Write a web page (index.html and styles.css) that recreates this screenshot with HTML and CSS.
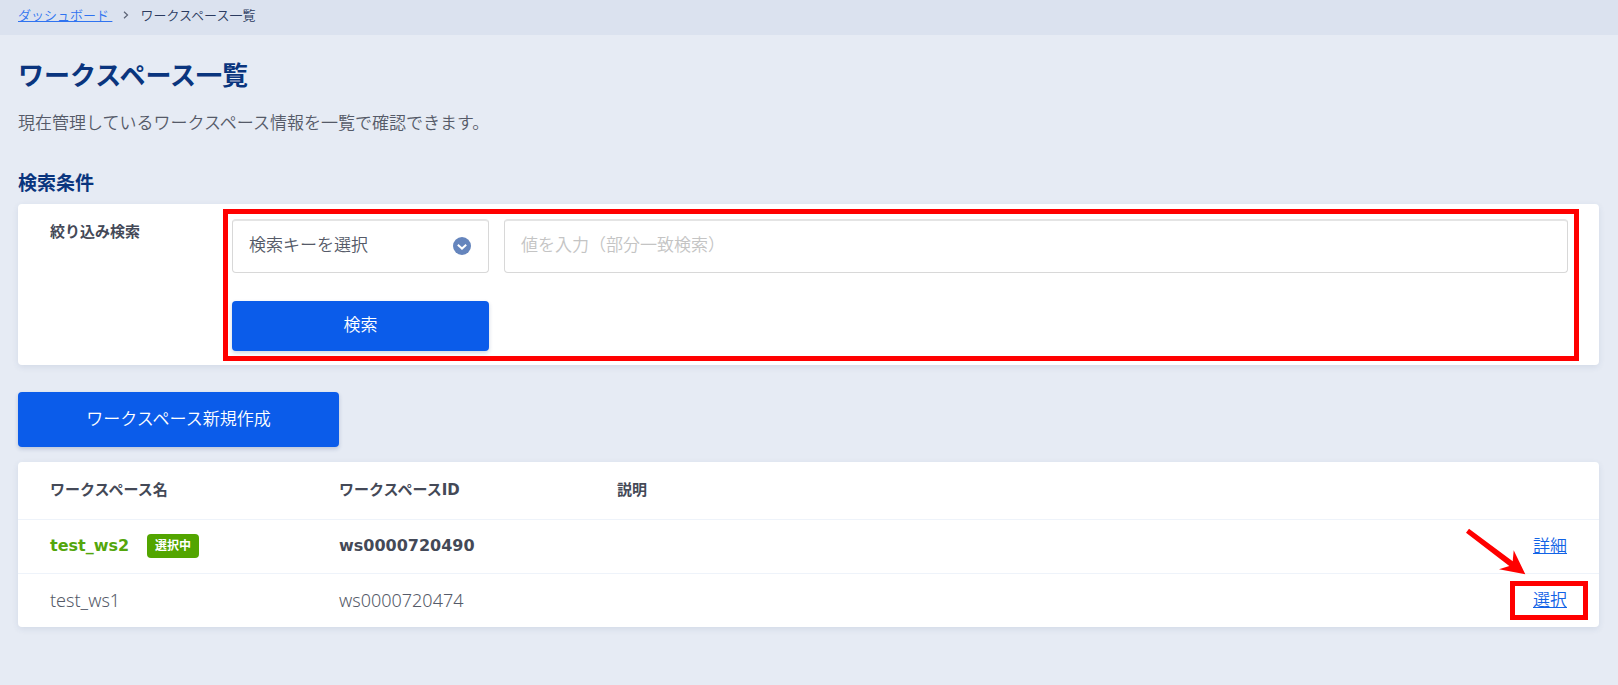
FILE: index.html
```html
<!DOCTYPE html>
<html lang="ja">

<head>
    <meta charset="UTF-8">
    <meta name="viewport" content="width=device-width, initial-scale=1.0">
    <title>ワークスペース一覧</title>
    <link rel="stylesheet" href="styles.css">
</head>

<body>
    <nav class="breadcrumb">
        <a href="#" class="link">ダッシュボード&nbsp;</a>
        <svg class="sep" width="6" height="8" viewBox="0 0 6 8">
            <path d="M1 0.8 L4.5 4 L1 7.2" fill="none" stroke="#5b6375" stroke-width="1.2" />
        </svg>
        <span>ワークスペース一覧</span>
    </nav>

    <main class="content">
        <h1>ワークスペース一覧</h1>
        <p class="lead">現在管理しているワークスペース情報を一覧で確認できます。</p>

        <h2>検索条件</h2>
        <form class="card search">
            <label class="searchLabel" for="keyword">絞り込み検索</label>
            <div class="fields">
                <div class="selectWrap">
                    <select id="searchKey" aria-label="検索キー">
                        <option>検索キーを選択</option>
                    </select>
                    <svg class="selectIcon" width="18" height="18" viewBox="0 0 18 18">
                        <circle cx="9" cy="9" r="9" fill="#6585bd" />
                        <path d="M4.8 7.8 L9 11.6 L13.2 7.8" fill="none" stroke="#fff" stroke-width="2" />
                    </svg>
                </div>
                <input type="text" id="keyword" placeholder="値を入力（部分一致検索）">
                <button type="button" class="btn">検索</button>
            </div>
        </form>

        <button type="button" class="btn btnNew">ワークスペース新規作成</button>

        <div class="card">
            <table>
                <thead>
                    <tr>
                        <th class="colName">ワークスペース名</th>
                        <th class="colId">ワークスペースID</th>
                        <th>説明</th>
                        <th class="colAction"></th>
                    </tr>
                </thead>
                <tbody>
                    <tr class="current">
                        <td><span class="name">test_ws2</span><span class="badge">選択中</span></td>
                        <td>ws0000720490</td>
                        <td></td>
                        <td class="action"><a href="#" class="link">詳細</a></td>
                    </tr>
                    <tr>
                        <td>test_ws1</td>
                        <td>ws0000720474</td>
                        <td></td>
                        <td class="action">
                            <span class="marked">
                                <a href="#" class="link">選択</a>
                                <svg class="arrow" width="60" height="47" viewBox="0 0 60 47">
                                    <path d="M3 0.7 L46.7 33.3 L47.7 22.3 L59.3 46.3 L33 41.3 L43.3 38 L0 4.7 Z" fill="#f00" />
                                </svg>
                            </span>
                        </td>
                    </tr>
                </tbody>
            </table>
        </div>
    </main>
</body>

</html>
```

FILE: styles.css
```css
* {
    box-sizing: border-box;
}

body {
    margin: 0;
    background-color: #e6ebf4;
    color: #555a68;
    font-family: "Noto Sans", "Noto Sans CJK JP", sans-serif;
    font-size: 17px;
    font-weight: 350;
    line-height: 24px;
}

.link {
    color: #1263e6;
}

.breadcrumb {
    display: flex;
    align-items: center;
    gap: 11px;
    height: 35px;
    padding: 0 18px 5px;
    background-color: #dbe2ef;
    color: #2b3b60;
    font-size: 13px;
}

.breadcrumb .link {
    color: #2f73f0;
}

.content {
    padding: 20px 19px 20px 18px;
}

h1,
h2 {
    margin: 0;
    color: #0a357e;
    font-weight: 700;
}

h1 {
    font-size: 26px;
    line-height: 40px;
}

.lead {
    margin: 16px 0 36px;
}

h2 {
    font-size: 19px;
    line-height: 24px;
    margin-bottom: 9px;
}

.card {
    background-color: #fff;
    border-radius: 4px;
    box-shadow: 0 2px 6px rgba(40, 70, 120, 0.1);
}

/* 検索条件 */
.search {
    display: flex;
    align-items: flex-start;
    padding: 15px 31px 14px 32px;
}

.searchLabel {
    width: 182px;
    color: #444957;
    font-size: 15px;
    font-weight: 700;
}

.fields {
    position: relative;
    flex: 1;
    display: grid;
    grid-template-columns: 257px 1fr;
    gap: 28px 15px;
}

.fields::after {
    content: "";
    position: absolute;
    inset: -10px -11px -10px -9px;
    border: 5px solid #f00;
    pointer-events: none;
}

.selectWrap {
    position: relative;
}

select,
input {
    appearance: none;
    display: block;
    width: 100%;
    height: 54px;
    padding: 0 16px 4px;
    border: 1px solid #d8d8d8;
    border-top: 2px solid #e4e4e4;
    border-radius: 4px;
    background-color: #fff;
    color: #555a68;
    font: inherit;
}

input::placeholder {
    color: #c4c4c4;
}

.selectIcon {
    position: absolute;
    top: 18px;
    right: 18px;
    pointer-events: none;
}

.btn {
    height: 50px;
    padding: 0 0 2px;
    border: 0;
    border-radius: 4px;
    background-color: #0b5cea;
    box-shadow: 0 2px 4px rgba(20, 50, 110, 0.2);
    color: #fff;
    font: inherit;
}

.btnNew {
    display: block;
    width: 321px;
    height: 55px;
    margin: 27px 0 15px;
}

/* 一覧 */
table {
    width: 100%;
    border-collapse: collapse;
    table-layout: fixed;
}

th,
td {
    height: 54px;
    padding: 0 32px;
    text-align: left;
}

th {
    height: 57px;
    color: #444957;
    font-family: "DejaVu Sans", "Noto Sans CJK JP", sans-serif;
    font-size: 15px;
    font-weight: 700;
}

td {
    border-top: 1px solid #eef3fa;
    font-size: 18px;
}

.colName {
    width: 289px;
}

.colId {
    width: 278px;
}

.colAction {
    width: 120px;
}

.current td {
    color: #444957;
    font-family: "DejaVu Sans", "Noto Sans CJK JP", sans-serif;
    font-size: 16px;
    font-weight: 700;
}

.current .name {
    color: #54a60c;
}

.badge {
    display: inline-block;
    margin-left: 18px;
    padding: 0 8px;
    border-radius: 4px;
    background-color: #52a500;
    color: #fff;
    font-size: 12px;
    line-height: 24px;
    vertical-align: middle;
}

.current td.action,
td.action {
    font-family: "Noto Sans", "Noto Sans CJK JP", sans-serif;
    font-size: 17px;
    font-weight: 350;
    text-align: right;
}

.marked {
    position: relative;
    display: inline-block;
}

.marked::after {
    content: "";
    position: absolute;
    inset: -7px -21px -8px -23px;
    border: 5px solid #f00;
    pointer-events: none;
}

.arrow {
    position: absolute;
    right: 41px;
    bottom: 37px;
}
```
